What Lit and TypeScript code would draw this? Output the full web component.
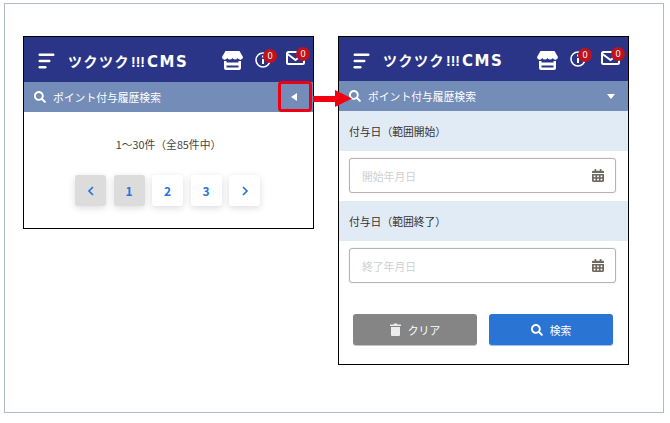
import { LitElement, html, css } from "lit";
import { customElement } from "lit/decorators.js";

const searchIcon = (size: number) => html`<svg width=${size} height=${size} viewBox="0 0 512 512" fill="currentColor"><path d="M505 442.700L405.300 343c-4.500-4.500-10.600-7-17-7H372c27.600-35.300 44-79.700 44-128C416 93.100 322.900 0 208 0S0 93.100 0 208s93.100 208 208 208c48.300 0 92.700-16.400 128-44v16.300c0 6.400 2.500 12.500 7 17l99.700 99.700c9.400 9.400 24.600 9.400 33.900 0l28.300-28.300c9.400-9.400 9.400-24.600.1-34zM208 336c-70.700 0-128-57.200-128-128 0-70.700 57.200-128 128-128 70.700 0 128 57.200 128 128 0 70.700-57.200 128-128 128z"/></svg>`;

const calIcon = html`<svg class="cal" width="12" height="13" viewBox="0 0 448 512" preserveAspectRatio="none" fill="currentColor"><path d="M0 464c0 26.500 21.500 48 48 48h352c26.500 0 48-21.500 48-48V192H0v272zm320-196c0-6.600 5.400-12 12-12h40c6.600 0 12 5.400 12 12v40c0 6.600-5.400 12-12 12h-40c-6.600 0-12-5.400-12-12v-40zm0 128c0-6.600 5.400-12 12-12h40c6.600 0 12 5.400 12 12v40c0 6.600-5.400 12-12 12h-40c-6.600 0-12-5.400-12-12v-40zM192 268c0-6.600 5.400-12 12-12h40c6.600 0 12 5.400 12 12v40c0 6.600-5.400 12-12 12h-40c-6.600 0-12-5.400-12-12v-40zm0 128c0-6.600 5.400-12 12-12h40c6.600 0 12 5.400 12 12v40c0 6.600-5.400 12-12 12h-40c-6.600 0-12-5.400-12-12v-40zM64 268c0-6.600 5.400-12 12-12h40c6.600 0 12 5.400 12 12v40c0 6.600-5.400 12-12 12H76c-6.600 0-12-5.400-12-12v-40zm0 128c0-6.600 5.400-12 12-12h40c6.600 0 12 5.400 12 12v40c0 6.600-5.400 12-12 12H76c-6.600 0-12-5.400-12-12v-40zM400 64h-48V16c0-8.800-7.200-16-16-16h-32c-8.800 0-16 7.200-16 16v48H160V16c0-8.800-7.200-16-16-16h-32c-8.800 0-16 7.200-16 16v48H48C21.500 64 0 85.500 0 112v48h448v-48c0-26.500-21.500-48-48-48z"/></svg>`;

const header = html`<div class="head">
  <svg class="burger" width="17" height="16" viewBox="0 0 17 16" fill="#fff"><rect x="0.500" y="0.500" width="16" height="2.400" rx="1.200"/><rect x="0.500" y="6.800" width="12" height="2.400" rx="1.200"/><rect x="0.500" y="13" width="8" height="2.400" rx="1.200"/></svg>
  <span class="logo"><span class="kana">ツクツク</span><span class="bang">!!!</span><span class="cms">CMS</span></span>
  <span class="spring"></span>
  <svg class="store" width="21" height="19" viewBox="0 0 21 19" fill="#fff"><path d="M3.500 0h14L21 6a2.700 2.700 0 0 1-5.200 1 3 3 0 0 1-5.300 0 3 3 0 0 1-5.300 0A2.700 2.700 0 0 1 0 6z"/><path d="M2 10h2.500v1.500h12V10H19v7a2 2 0 0 1-2 2H4a2 2 0 0 1-2-2zM4.500 14.500v2h12v-2z" fill-rule="evenodd"/></svg>
  <span class="ico info"><svg width="16" height="16" viewBox="0 0 16 16" fill="none" stroke="#fff" stroke-width="1.600"><circle cx="8" cy="8" r="7"/><path d="M8 7v5" stroke-width="2"/><path d="M8 3.500v2" stroke-width="2"/></svg><b class="badge">0</b></span>
  <span class="ico mail"><svg width="19" height="14" viewBox="0 0 19 14" fill="none" stroke="#fff" stroke-width="2"><rect x="1" y="1" width="17" height="12" rx="1.500"/><path d="M1.500 3L9.500 9 17.500 3"/></svg><b class="badge">0</b></span>
</div>`;

const field = (label: string, ph: string) => html`
  <div class="flabel">${label}</div>
  <div class="fbody"><div class="input"><span>${ph}</span>${calIcon}</div></div>`;

@customElement("app-root")
export class AppRoot extends LitElement {
  static styles = css`
    :host { display: block; width: 670px; height: 423px; background: #fff; overflow: hidden;
      font-family: "Noto Sans CJK JP", "Noto Sans", sans-serif; color: #333; padding-top: 3px; box-sizing: border-box; }
    .frame { position: relative; box-sizing: border-box; width: 660px; height: 410px; margin-left: 4px;
      border: 1px solid #adbbcd; padding: 32px 0 0 18px; display: flex; gap: 24px; align-items: flex-start; }
    .phone { box-sizing: border-box; width: 291px; border: 1px solid #000; background: #fff; display: flex; flex-direction: column; }
    .p1 { height: 193px; }
    .p2 { height: 329px; }
    .head { height: 45px; background: #2a3587; display: flex; align-items: center; padding: 0 0 0 14px; color: #fff; flex: none; }
    .p2 .head { height: 44px; }
    .burger { flex: none; margin-top: 3px; }
    .logo { margin-left: 13px; margin-top: 3px; display: flex; align-items: baseline; white-space: nowrap; font-weight: 700; line-height: 20px; }
    .kana { font-size: 14px; letter-spacing: 1.500px; font-family: "Noto Sans CJK JP", sans-serif; }
    .bang { font-size: 14px; font-family: "Liberation Sans", sans-serif; margin-left: 1px; }
    .cms { font-size: 15px; letter-spacing: 1.500px; font-family: "DejaVu Sans", sans-serif; margin-left: 2px; }
    .spring { flex: 1; }
    .store { flex: none; margin-right: 12px; margin-top: 2px; }
    .ico { position: relative; display: block; line-height: 0; flex: none; }
    .info { margin-right: 15px; margin-top: 0; }
    .mail { margin-right: 8px; margin-top: -3px; }
    .badge { position: absolute; width: 14px; height: 14px; border-radius: 50%; background: #c1121c; color: #fff; font-size: 9px; line-height: 14px; font-weight: 400; text-align: center; font-family: "Noto Sans", sans-serif; }
    .info .badge { right: -6px; top: -3px; }
    .mail .badge { right: -5px; top: -4px; }
    .bar { height: 30px; background: #748cb8; color: #fff; display: flex; align-items: center; padding: 0 0 0 10px; font-size: 10.800px; flex: none; position: relative; }
    .bar svg { flex: none; }
    .bar span { margin-left: 7px; }
    .caret { position: absolute; top: 50%; width: 0; height: 0; border-style: solid; }
    .caret.left { right: 16px; margin-top: -4px; border-width: 4px 6px 4px 0; border-color: transparent #fff transparent transparent; }
    .caret.down { right: 13px; margin-top: -2px; border-width: 5px 4px 0 4px; border-color: #fff transparent transparent transparent; }
    .hilite { position: absolute; right: 1px; top: -1px; box-sizing: border-box; width: 34px; height: 31px; border: 3px solid #ee0012; border-radius: 4px; }
    .count { text-align: center; font-size: 10.800px; color: #444; line-height: 16px; margin-top: 24px; }
    .pager { display: flex; justify-content: center; gap: 7.500px; margin-top: 23px; padding-right: 2px; }
    .pg { width: 31px; height: 31px; border-radius: 3px; background: #fff; color: #2a74d4; font-size: 12px; font-weight: 700; display: flex; align-items: center; justify-content: center; box-shadow: 0 2px 7px rgba(0,0,0,.14); }
    .pg.on { background: #dcdcdc; }
    .pg svg { display: block; }
    .flabel { height: 40px; box-sizing: border-box; background: #e1ebf5; font-size: 10.800px; color: #333; display: flex; align-items: center; padding: 0 0 0 10px; flex: none; }
    .fbody { box-sizing: border-box; height: 50px; padding: 7px 12px 0 10px; flex: none; }
    .input { box-sizing: border-box; height: 35px; border: 1px solid #b4b4b4; box-shadow: 0 0 1px #b4b4b4; border-radius: 3px; display: flex; align-items: center; justify-content: space-between; padding: 0 11px 0 12px; font-size: 10.800px; color: #cfcfcf; }
    .cal { color: #6f6a5f; }
    .btns { display: flex; gap: 12px; padding: 0 15px 0 14px; margin-top: 23px; }
    .btn { flex: 1; height: 31px; border-radius: 3px; color: #fff; font-size: 10.800px; display: flex; align-items: center; justify-content: center; gap: 7px; }
    .gray { background: #858585; box-shadow: 0 1px 0 #c4c4c4; }
    .gray svg { opacity: .85; }
    .blue { background: #2a74d4; box-shadow: 0 1px 0 #9dc0ee; }
    .arrow { position: absolute; left: 308px; top: 86px; }
  `;

  render() {
    return html`<div class="frame">
      <div class="phone p1">
        ${header}
        <div class="bar">${searchIcon(12)}<span>ポイント付与履歴検索</span><i class="caret left"></i><i class="hilite"></i></div>
        <div class="count">1〜30件（全85件中）</div>
        <div class="pager">
          <div class="pg on"><svg width="8" height="10" viewBox="0 0 8 10" fill="none" stroke="#2a74d4" stroke-width="1.700"><path d="M6 1L2 5l4 4"/></svg></div>
          <div class="pg on">1</div>
          <div class="pg">2</div>
          <div class="pg">3</div>
          <div class="pg"><svg width="8" height="10" viewBox="0 0 8 10" fill="none" stroke="#2a74d4" stroke-width="1.700"><path d="M2 1l4 4-4 4"/></svg></div>
        </div>
      </div>
      <div class="phone p2">
        ${header}
        <div class="bar">${searchIcon(12)}<span>ポイント付与履歴検索</span><i class="caret down"></i></div>
        ${field("付与日（範囲開始）", "開始年月日")}
        ${field("付与日（範囲終了）", "終了年月日")}
        <div class="btns">
          <div class="btn gray"><svg width="11" height="13" viewBox="0 0 11 13" fill="#fff"><path d="M0 1.500h3.500L4 .5h3l.5 1H11V3H0zM1 4h9v8a1 1 0 0 1-1 1H2a1 1 0 0 1-1-1z"/></svg>クリア</div>
          <div class="btn blue">${searchIcon(12)}検索</div>
        </div>
      </div>
      <svg class="arrow" width="39" height="17" viewBox="0 0 39 17"><path d="M0 6h22V0l17 8.500-17 8.500v-5H0z" fill="#f20010"/></svg>
    </div>`;
  }
}
